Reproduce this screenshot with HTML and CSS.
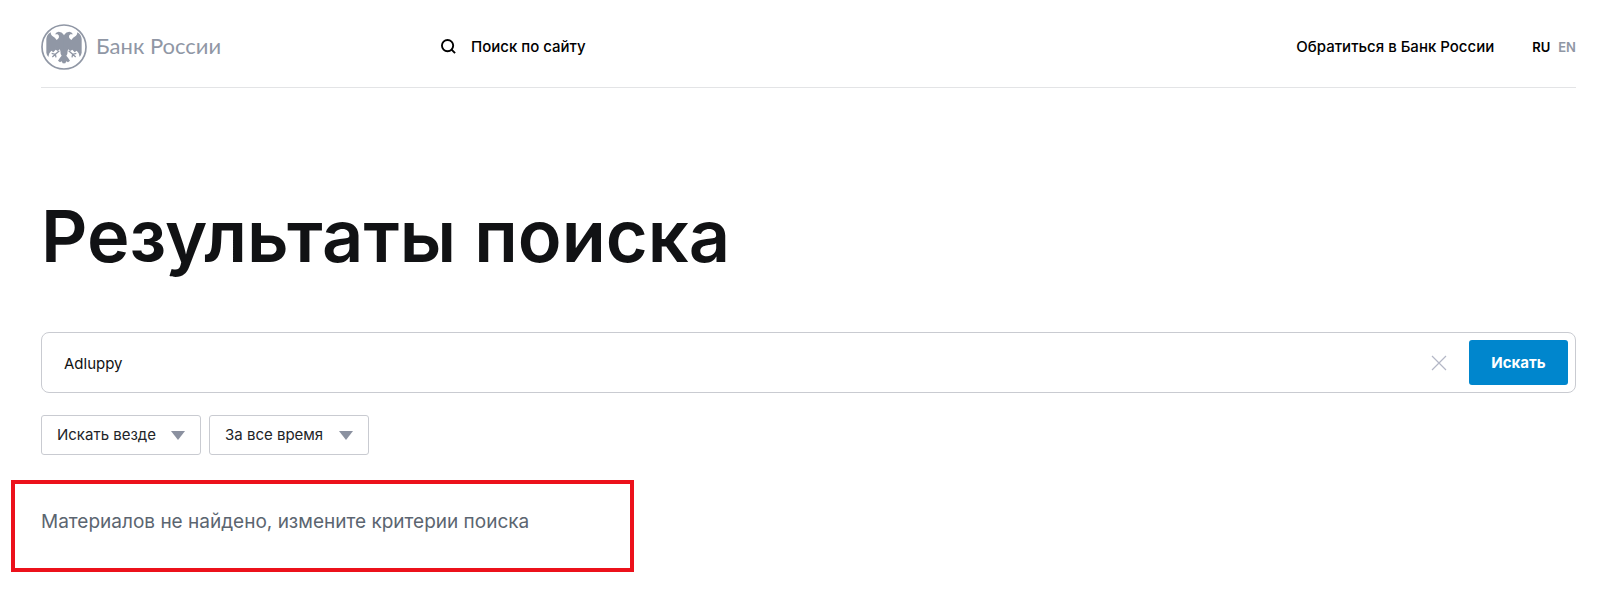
FILE: index.html
```
<!DOCTYPE html>
<html lang="ru">
<head>
    <meta charset="UTF-8">
    <meta name="viewport" content="width=device-width, initial-scale=1.0">
    <title>Результаты поиска | Банк России</title>
    <link rel="stylesheet" href="styles.css">
</head>
<body>

    <!-- Header -->
    <header class="header">
        <div class="header-left">
            <a href="#" class="logo">
                <svg class="logo-icon" viewBox="0 0 138 138" aria-hidden="true">
                    <defs>
                        <g id="half">
                            <path d="M70 36 L67 31 Q63 23 53 23 Q46 23 42 31 L50 31 Q55 34 54 40 Q52 45 47 48 Q43 40 33 35 Q29 32 29 25 Q17 32 16 45 L16 86 Q17 93 22 99 L25 88 L31 80 L37 85 L44 77 L50 81 L56 76 Q60 82 59 90 L62 95 Q55 103 51 110 L57 115 L62 112 L65 118 L70 118 Z"/>
                            <path d="M55 80 L43 91 L32 88 M43 91 L34 99 M43 91 L45 100" class="claw"/>
                        </g>
                    </defs>
                    <circle cx="69" cy="69" r="66"/>
                    <use href="#half"/>
                    <use href="#half" transform="matrix(-1 0 0 1 138 0)"/>
                </svg>
                <span class="logo-text">Банк России</span>
            </a>
            <a href="#" class="site-search">
                <svg class="search-icon" viewBox="0 0 16 16" aria-hidden="true">
                    <circle cx="7" cy="7" r="6"/>
                    <path d="M11 11 L15 15"/>
                </svg>
                Поиск по сайту
            </a>
        </div>
        <nav class="header-right">
            <a href="#" class="contact">Обратиться в Банк России</a>
            <a href="#" class="lang">RU</a>
            <a href="#" class="lang lang-muted">EN</a>
        </nav>
    </header>

    <main class="content">
        <h1>Результаты поиска</h1>

        <form class="search">
            <div class="search-box">
                <input type="text" class="search-input" value="Adluppy" aria-label="Поиск">
                <button type="reset" class="clear" aria-label="Очистить">
                    <svg viewBox="0 0 16 16" aria-hidden="true">
                        <path d="M1 1 L15 15 M15 1 L1 15"/>
                    </svg>
                </button>
                <button type="submit" class="submit">Искать</button>
            </div>

            <!-- Filters -->
            <div class="filters">
                <div class="filter">
                    <select aria-label="Раздел">
                        <option>Искать везде</option>
                    </select>
                </div>
                <div class="filter">
                    <select aria-label="Период">
                        <option>За все время</option>
                    </select>
                </div>
            </div>
        </form>

        <div class="message">
            <p>Материалов не найдено, измените критерии поиска</p>
        </div>
    </main>

</body>
</html>
```
FILE: styles.css
```
* {
    box-sizing: border-box;
}

body {
    font-family: Inter, 'Liberation Sans', sans-serif;
    background: #fff;
    margin: 0;
    padding: 0 24px 0 41px;
    color: #000;
}

a {
    color: inherit;
    text-decoration: none;
}

/* Header */
.header {
    display: flex;
    justify-content: space-between;
    align-items: center;
    height: 88px;
    padding-top: 6px;
    border-bottom: 1px solid #e3e4e6;
    font-size: 15px;
    font-weight: 500;
}

.header-left,
.header-right,
.logo,
.site-search {
    display: flex;
    align-items: center;
}

.logo {
    width: 400px;
    gap: 9px;
    color: #9097a5;
}

.logo-icon {
    width: 46px;
    height: 46px;
    fill: #9097a5;
}

.logo-icon circle {
    fill: none;
    stroke: #9097a5;
    stroke-width: 5;
}

.logo-icon .claw {
    fill: none;
    stroke: #9097a5;
    stroke-width: 4;
}

.logo-text {
    font-family: Lato, sans-serif;
    font-size: 22px;
    line-height: 24px;
    font-weight: 400;
    padding-bottom: 2px;
}

.site-search {
    gap: 15px;
}

.search-icon {
    width: 15px;
    height: 15px;
    fill: none;
    stroke: #000;
    stroke-width: 2;
}

.contact {
    margin-right: 38px;
}

.lang {
    font-size: 13px;
    font-weight: 600;
}

.lang-muted {
    margin-left: 8px;
    color: #9097a5;
}

/* Title */
h1 {
    margin: 104px 0 52px;
    font-size: 72px;
    line-height: 88px;
    font-weight: 600;
    color: #111214;
}

/* Search form */
.search-box {
    display: flex;
    align-items: center;
    height: 61px;
    padding: 0 7px 0 22px;
    border: 1px solid #c9cbd1;
    border-radius: 8px;
}

.search-input {
    flex: 1;
    min-width: 0;
    padding: 2px 0 0;
    border: 0;
    outline: 0;
    font: 15px/24px Inter, sans-serif;
    color: #111214;
}

.clear {
    display: flex;
    margin-right: 22px;
    padding: 0;
    border: 0;
    background: none;
    cursor: pointer;
}

.clear svg {
    width: 16px;
    height: 16px;
    fill: none;
    stroke: #b3b7c6;
    stroke-width: 1.2;
}

.submit {
    width: 99px;
    height: 45px;
    padding: 0;
    border: 0;
    border-radius: 3px;
    background: #0086cd;
    color: #fff;
    font: 700 15px/24px Inter, sans-serif;
    cursor: pointer;
}

/* Filters */
.filters {
    display: flex;
    gap: 8px;
    margin-top: 22px;
}

.filter {
    position: relative;
}

.filter select {
    appearance: none;
    width: 160px;
    height: 40px;
    padding: 0 32px 0 15px;
    border: 1px solid #c9cbd1;
    border-radius: 3px;
    background: #fff;
    color: #222428;
    font: 15px/24px Inter, sans-serif;
}

.filter::after {
    content: "";
    position: absolute;
    top: 16px;
    right: 16px;
    border: 7px solid transparent;
    border-top: 9px solid #8b91a0;
    border-bottom: 0;
    pointer-events: none;
}

/* Empty result */
.message {
    width: 40%;
    min-width: 623px;
    margin: 25px 0 0 -30px;
    padding: 22px 26px 30px;
    border: 4px solid #ec111b;
}

.message p {
    margin: 0;
    font-size: 19px;
    line-height: 32px;
    color: #5b6570;
}
```
